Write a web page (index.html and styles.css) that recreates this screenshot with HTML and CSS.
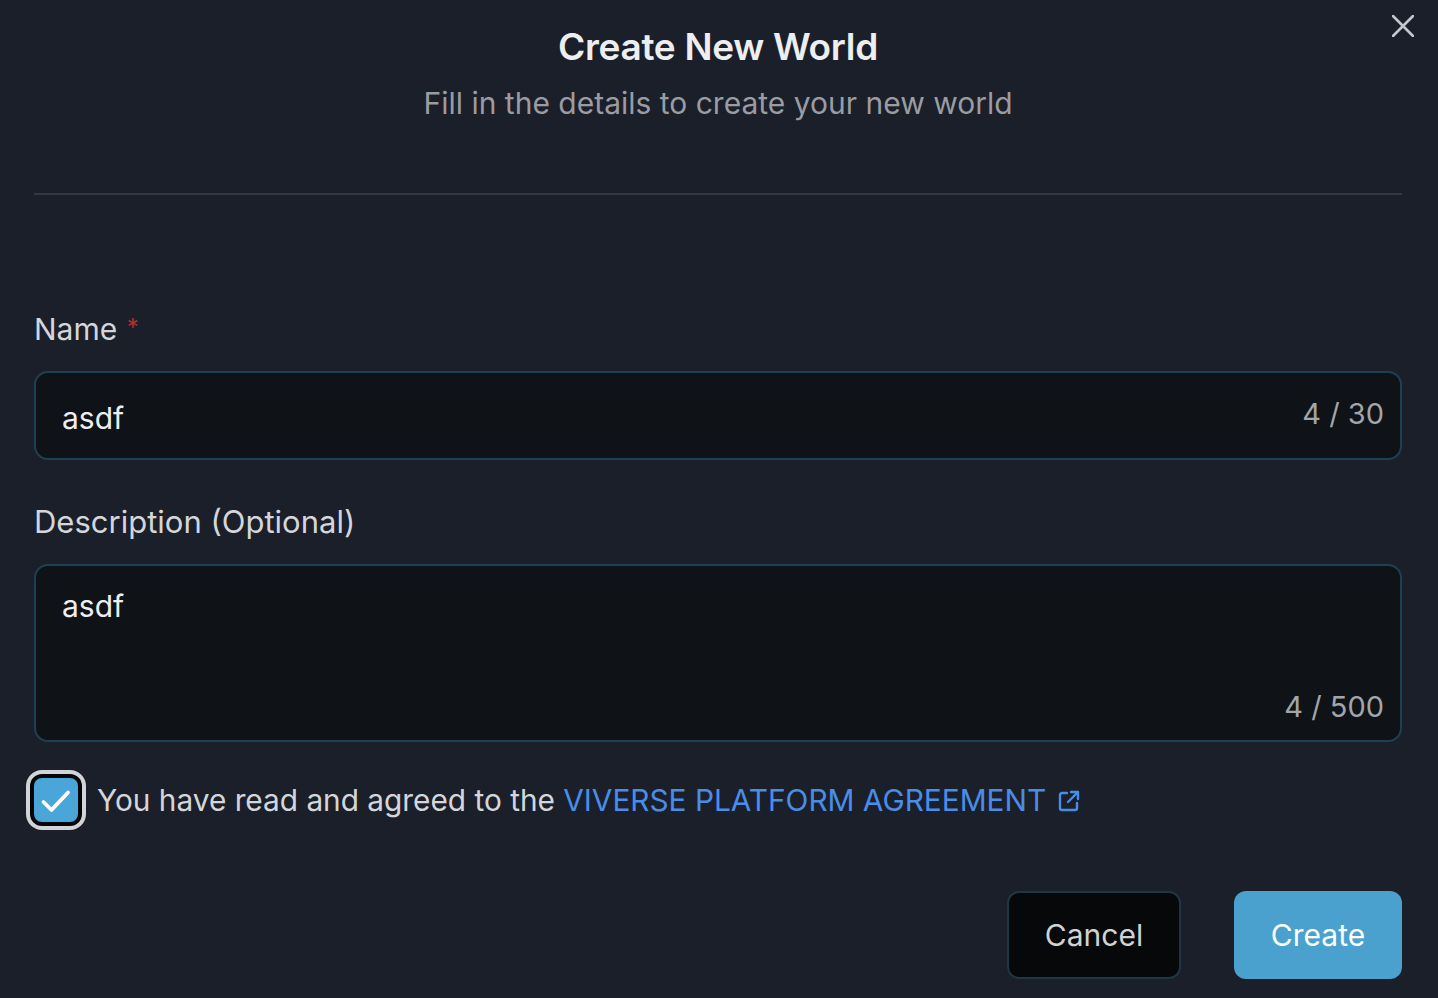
FILE: index.html
```html
<!DOCTYPE html>
<html lang="en">
<head>
<meta charset="utf-8">
<title>Create New World</title>
<link rel="stylesheet" href="styles.css">
</head>
<body>
<div class="modal">
  <button class="close" aria-label="Close">
    <svg width="22" height="22" viewBox="0 0 22 22"><path d="M1 1L21 21M21 1L1 21" stroke="#c3c6cc" stroke-width="2.6" stroke-linecap="round"/></svg>
  </button>
  <header class="head">
    <h1 class="title">Create New World</h1>
    <p class="subtitle">Fill in the details to create your new world</p>
  </header>
  <hr class="divider">
  <form class="form">
    <div class="field">
      <label class="label">Name <span class="req">*</span></label>
      <div class="input">
        <span class="value">asdf</span>
        <span class="count">4 / 30</span>
      </div>
    </div>
    <div class="field field-desc">
      <label class="label">Description (Optional)</label>
      <div class="textarea">
        <span class="value">asdf</span>
        <span class="count">4 / 500</span>
      </div>
    </div>
    <div class="agree">
      <span class="check">
        <svg width="44" height="44" viewBox="0 0 44 44"><path d="M9.5 24L17.5 32L34 14.5" fill="none" stroke="#fff" stroke-width="3.8" stroke-linecap="round" stroke-linejoin="round"/></svg>
      </span>
      <span class="agree-text">You have read and agreed to the <a class="link" href="#">VIVERSE PLATFORM AGREEMENT<svg class="ext" width="24" height="24" viewBox="0 0 24 24"><path d="M10 4H5a2 2 0 0 0-2 2v13a2 2 0 0 0 2 2h13a2 2 0 0 0 2-2v-5" fill="none" stroke="#4a8de8" stroke-width="2.4" stroke-linecap="round"/><path d="M14 3H21V10M21 3L11 13" fill="none" stroke="#4a8de8" stroke-width="2.4" stroke-linecap="round" stroke-linejoin="round"/></svg></a></span>
    </div>
    <div class="actions">
      <button type="button" class="btn btn-cancel">Cancel</button>
      <button type="button" class="btn btn-create">Create</button>
    </div>
  </form>
</div>
</body>
</html>
```
FILE: styles.css
```css
* { box-sizing: border-box; }
html, body { margin: 0; padding: 0; }
body {
  background: #1b1f2a;
  font-family: Inter, "Noto Sans", sans-serif;
  color: #d4d6da;
  width: 1438px;
  height: 998px;
  overflow: hidden;
}
.modal {
  position: relative;
  padding: 0 36px 0 34px;
}
.close {
  position: absolute;
  top: 15px;
  right: 24px;
  background: none;
  border: 0;
  padding: 0;
  width: 22px;
  height: 22px;
  cursor: pointer;
}
.head {
  display: flex;
  flex-direction: column;
  align-items: center;
  padding-top: 24px;
}
.title {
  margin: 0;
  font-size: 37px;
  font-weight: 600;
  line-height: 46px;
  color: #eceef0;
  letter-spacing: -0.3px;
}
.subtitle {
  margin: 15px 0 0;
  font-size: 30px;
  line-height: 36px;
  color: #9a9ca2;
}
.divider {
  border: 0;
  height: 2px;
  background: #323743;
  margin: 72px 0 0;
}
.form {
  display: flex;
  flex-direction: column;
  padding-top: 117px;
}
.field { display: flex; flex-direction: column; }
.field-desc { margin-top: 45px; }
.label {
  font-size: 30px;
  line-height: 34px;
  height: 34px;
  color: #d4d6da;
  margin-bottom: 25px;
}
.field-desc .label { font-size: 31px; }
.req { color: #b3302b; font-size: 24px; line-height: 0; vertical-align: 4px; margin-left: 1px; }
.input, .textarea {
  background: #0f1217;
  border: 2px solid #1f3f53;
  border-radius: 14px;
  display: flex;
  color: #eceef0;
  font-size: 29px;
}
.value { font-size: 30px; }
.input {
  height: 89px;
  align-items: center;
  justify-content: space-between;
  padding: 0 16px 0 26px;
}
.input .value { padding-top: 4px; }
.input .count { color: #a3a5aa; padding-bottom: 4px; }
.textarea {
  height: 178px;
  flex-direction: column;
  justify-content: space-between;
  padding: 22px 16px 16px 26px;
}
.textarea .count { align-self: flex-end; color: #a3a5aa; }
.agree {
  display: flex;
  align-items: center;
  margin-top: 36px;
  margin-left: 0;
}
.check {
  width: 44px;
  height: 44px;
  border-radius: 8px;
  background: #4aa6d8;
  box-shadow: 0 0 0 4px #05060a, 0 0 0 8px #d3d4d8;
  display: flex;
  flex-shrink: 0;
}
.agree-text {
  margin-left: 19px;
  font-size: 29.8px;
  color: #d4d6da;
}
.link {
  color: #4a8de8;
  text-decoration: none;
}
.ext { margin-left: 11px; vertical-align: -2px; }
.actions {
  display: flex;
  justify-content: flex-end;
  gap: 53px;
  margin-top: 69px;
}
.btn {
  height: 88px;
  border-radius: 12px;
  font-family: Inter, "Noto Sans", sans-serif;
  font-size: 30px;
  cursor: pointer;
}
.btn-cancel {
  width: 174px;
  background: #07080a;
  border: 2px solid #1e3646;
  color: #d2d2d4;
}
.btn-create {
  width: 168px;
  background: #4aa1cd;
  border: 0;
  color: #ffffff;
}
```
